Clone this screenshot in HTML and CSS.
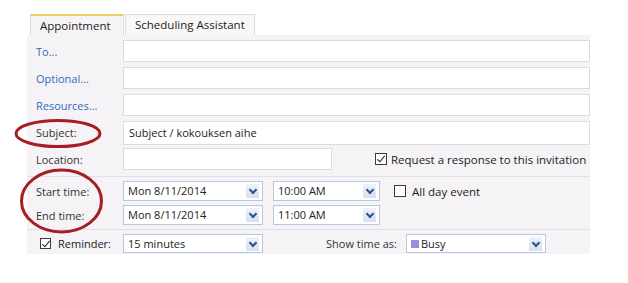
FILE: index.html
```html
<!DOCTYPE html>
<html lang="en">
<head>
    <meta charset="UTF-8">
    <title>Appointment</title>
    <meta name="viewport" content="width=device-width, initial-scale=1">
    <link rel="stylesheet" href="styles.css">
</head>
<body>

    <div id="appointment">
        <div class="tabs">
            <div class="tab active">Appointment</div>
            <div class="tab">Scheduling Assistant</div>
        </div>

        <div class="panel">
            <div class="row">
                <a class="label link">To...</a>
                <div class="textbox"></div>
            </div>
            <div class="row">
                <a class="label link">Optional...</a>
                <div class="textbox"></div>
            </div>
            <div class="row">
                <a class="label link">Resources...</a>
                <div class="textbox"></div>
            </div>
            <div class="row">
                <span class="label">Subject:</span>
                <div class="textbox subject">Subject / kokouksen aihe</div>
            </div>
            <div class="row">
                <span class="label">Location:</span>
                <div class="textbox location"></div>
                <label class="check request"><span class="box checked"></span>Request a response to this invitation</label>
            </div>

            <div class="times">
                <div class="row time-row">
                    <span class="label">Start time:</span>
                    <div class="combo date">Mon 8/11/2014<span class="arrow"></span></div>
                    <div class="combo hour">10:00 AM<span class="arrow"></span></div>
                    <label class="check allday"><span class="box"></span>All day event</label>
                </div>
                <div class="row time-row">
                    <span class="label">End time:</span>
                    <div class="combo date">Mon 8/11/2014<span class="arrow"></span></div>
                    <div class="combo hour">11:00 AM<span class="arrow"></span></div>
                </div>
            </div>

            <div class="row reminder-row">
                <label class="check reminder"><span class="box checked"></span>Reminder:</label>
                <div class="combo date">15 minutes<span class="arrow"></span></div>
                <span class="show-as">Show time as:</span>
                <div class="combo busy"><span class="swatch"></span>Busy<span class="arrow"></span></div>
            </div>
        </div>

        <svg class="marks" width="628" height="283" viewBox="0 0 628 283">
            <ellipse cx="58" cy="133.5" rx="42" ry="13" />
            <ellipse cx="61.5" cy="201" rx="40" ry="31" />
        </svg>
    </div>

</body>
</html>
```

FILE: styles.css
```css
body {
    font-family: 'Open Sans', 'Noto Sans', sans-serif;
    font-size: 11px;
    color: #333;
    background-color: #fff;
    margin: 0;
    padding: 0;
}

#appointment {
    width: 563px;
    padding: 14px 0 30px 27px;
}

.tabs {
    display: flex;
    height: 21px;
    padding-left: 3px;
    gap: 1px;
}

.tab {
    padding: 0 9px;
    line-height: 20px;
    font-size: 11.5px;
    background-color: #f8f8f8;
    border: 1px solid #dcdcdc;
    border-bottom: none;
    color: #222;
}

.tab.active {
    width: 74px;
    line-height: 19px;
    background-color: #f5f3f6;
    border-top: 2px solid #efcd5a;
}

.panel {
    background-color: #f5f3f6;
    padding: 5px 0 1px 0;
}

.row {
    display: flex;
    align-items: center;
    height: 22px;
    margin-bottom: 5px;
}

.label {
    width: 96px;
    flex-shrink: 0;
    padding-left: 9px;
    box-sizing: border-box;
    color: #333;
}

.link {
    color: #2f6cb8;
}

.textbox {
    flex: 1;
    height: 22px;
    background-color: #fff;
    border: 1px solid #dedbe0;
    box-sizing: border-box;
    padding-left: 5px;
    line-height: 20px;
    color: #222;
}

.textbox.subject {
    height: 24px;
    line-height: 22px;
    margin-top: 1px;
}

.textbox.location {
    flex: none;
    width: 209px;
}

.check {
    display: flex;
    align-items: center;
    color: #222;
}

.box {
    width: 12px;
    height: 12px;
    box-sizing: border-box;
    border: 1px solid #3a3a3a;
    background-color: #fff;
    margin-right: 4px;
    position: relative;
}

.box.checked::after {
    content: "";
    position: absolute;
    left: 3px;
    top: 0px;
    width: 3px;
    height: 7px;
    border: solid #222;
    border-width: 0 1.5px 1.5px 0;
    transform: rotate(40deg);
}

.request {
    margin-left: 43px;
    font-size: 11.5px;
}

.times {
    border-top: 1px solid #e2dee3;
    border-bottom: 1px solid #e2dee3;
    margin-top: 6px;
    padding: 4px 0 4px 0;
    margin-bottom: 4px;
}

.times .row {
    height: 20px;
    margin-bottom: 4px;
}

.times .row:last-child {
    margin-bottom: 0;
}

.combo {
    height: 20px;
    box-sizing: border-box;
    border: 1px solid #b3c8e4;
    background-color: #fff;
    padding-left: 4px;
    line-height: 18px;
    position: relative;
    color: #222;
    display: flex;
    align-items: center;
}

.combo.date {
    width: 140px;
}

.combo.hour {
    width: 107px;
    margin-left: 10px;
}

.combo.busy {
    width: 140px;
    margin-left: 9px;
}

.arrow {
    position: absolute;
    right: 3px;
    top: 2px;
    width: 13px;
    height: 14px;
    background: linear-gradient(#eef2f9, #d7e0ef);
}

.arrow::after {
    content: "";
    position: absolute;
    left: 4px;
    top: 3px;
    width: 4px;
    height: 4px;
    border: solid #2d4f8f;
    border-width: 0 2px 2px 0;
    transform: rotate(45deg);
}

.allday {
    margin-left: 14px;
    font-size: 11.5px;
}

.allday .box {
    margin-right: 6px;
}

.reminder-row {
    height: 19px;
    margin-bottom: 0;
}

.reminder-row .combo {
    height: 19px;
}

.reminder {
    width: 96px;
    flex-shrink: 0;
    padding-left: 13px;
    box-sizing: border-box;
}

.reminder .box {
    width: 11px;
    height: 11px;
    margin-right: 7px;
}

.show-as {
    margin-left: 63px;
}

.swatch {
    width: 8px;
    height: 8px;
    background-color: #9890dc;
    margin-right: 2px;
}

.marks {
    position: absolute;
    left: 0;
    top: 0;
    pointer-events: none;
}

.marks ellipse {
    fill: none;
    stroke: #a41e22;
    stroke-width: 3;
}
```
